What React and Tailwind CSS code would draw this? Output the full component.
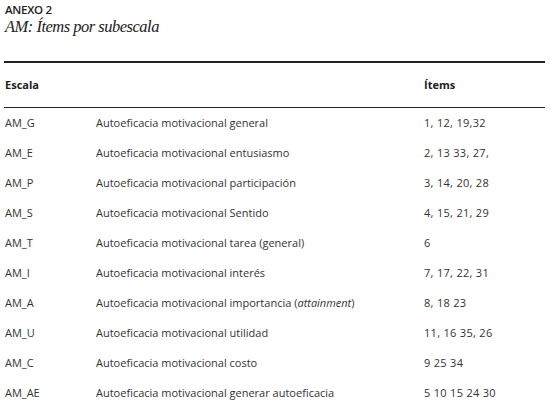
import React from 'react';

const rows = [
  { code: 'AM_G', desc: 'Autoeficacia motivacional general', items: '1, 12, 19,32' },
  { code: 'AM_E', desc: 'Autoeficacia motivacional entusiasmo', items: '2, 13 33, 27,' },
  { code: 'AM_P', desc: 'Autoeficacia motivacional participación', items: '3, 14, 20, 28' },
  { code: 'AM_S', desc: 'Autoeficacia motivacional Sentido', items: '4, 15, 21, 29' },
  { code: 'AM_T', desc: 'Autoeficacia motivacional tarea (general)', items: '6' },
  { code: 'AM_I', desc: 'Autoeficacia motivacional interés', items: '7, 17, 22, 31' },
  { code: 'AM_A', desc: <>Autoeficacia motivacional importancia (<i>attainment</i>)</>, items: '8, 18 23' },
  { code: 'AM_U', desc: 'Autoeficacia motivacional utilidad', items: '11, 16 35, 26' },
  { code: 'AM_C', desc: 'Autoeficacia motivacional costo', items: '9 25 34' },
  { code: 'AM_AE', desc: 'Autoeficacia motivacional generar autoeficacia', items: '5 10 15 24 30' },
];

const App = () => {
  return (
    <div className="bg-white w-[550px] h-[403px] overflow-hidden pl-[4px] pr-[5px] text-[#333] font-['Open_Sans',sans-serif]">
      {/* caption */}
      <p className="pt-[3px] pl-[1px] text-[11.5px] leading-[14px] font-semibold text-[#222] tracking-tight">ANEXO 2</p>
      <h1 className="pl-[1px] text-[16.5px] leading-[20px] italic tracking-[-0.5px] font-['Liberation_Serif',serif] text-[#222]">AM: Ítems por subescala</h1>

      <div className="mt-[24px] h-[2px] bg-[#222]" />

      {/* header */}
      <div className="grid grid-cols-[92px_328px_1fr] h-[44px] items-center text-[11px] font-bold text-[#222]">
        <span className="pl-[1px]">Escala</span>
        <span />
        <span>Ítems</span>
      </div>

      <div className="h-px bg-[#222]" />

      {/* rows */}
      {rows.map((r) => (
        <div key={r.code} className="grid grid-cols-[92px_328px_1fr] h-[30px] items-center text-[11px]">
          <span className="pl-[1px]">{r.code}</span>
          <span>{r.desc}</span>
          <span className="tracking-[0.3px]">{r.items}</span>
        </div>
      ))}
    </div>
  );
};

export default App;
